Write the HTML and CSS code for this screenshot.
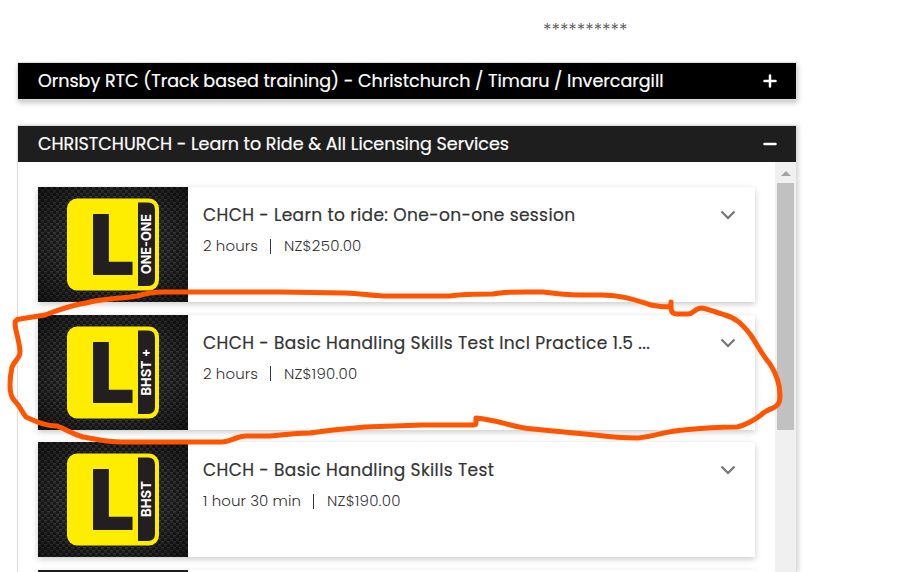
FILE: index.html
```html
<!DOCTYPE html>
<html lang="en">
<head>
<meta charset="utf-8">
<title>Services</title>
<link rel="stylesheet" href="styles.css">
</head>
<body>
<p class="stars">**********</p>

<section class="panel">
  <header class="panel-head"><span>Ornsby RTC (Track based training) - Christchurch / Timaru / Invercargill</span>
    <svg class="toggle" viewBox="0 0 14 14"><path d="M7 1.500v11M1.500 7h11"/></svg></header>
</section>

<section class="panel open">
  <header class="panel-head dark"><span>CHRISTCHURCH - Learn to Ride &amp; All Licensing Services</span>
    <svg class="toggle" viewBox="0 0 14 14"><path d="M1.500 7h11"/></svg></header>
  <div class="panel-body">
    <div class="list">
      <article class="card">
        <svg class="thumb" viewBox="0 0 150 115">
          <defs>
            <pattern id="weave" width="6" height="6" patternUnits="userSpaceOnUse">
              <rect width="6" height="6" fill="#1a1a1a"/>
              <rect width="3" height="1" fill="#3c3c3c"/><rect y="1" width="3" height="2" fill="#2c2c2c"/>
              <rect x="3" y="3" width="3" height="1" fill="#3c3c3c"/><rect x="3" y="4" width="3" height="2" fill="#2c2c2c"/>
            </pattern>
            <radialGradient id="shade" r=".72"><stop offset=".5" stop-opacity="0"/><stop offset="1" stop-opacity=".55"/></radialGradient>
            <g id="plate">
              <rect width="150" height="115" fill="url(#weave)"/>
              <rect width="150" height="115" fill="url(#shade)"/>
              <rect x="29" y="11.500" width="92" height="92" rx="10" fill="#ffed00"/>
              <path d="M100 15.500h10q7 0 7 7v69.500q0 7-7 7h-10z" fill="#231f20"/>
              <text class="big-l" x="51.200" y="88" textLength="45.500" lengthAdjust="spacingAndGlyphs">L</text>
            </g>
          </defs>
          <use href="#plate"/>
          <text class="tag" transform="translate(113 57) rotate(-90)" textLength="60" lengthAdjust="spacingAndGlyphs">ONE-ONE</text>
        </svg>
        <div class="info"><h3>CHCH - Learn to ride: One-on-one session</h3>
          <p><span>2 hours</span><i></i><span class="price">NZ$250.00</span></p></div>
        <svg class="chevron" viewBox="0 0 16 10"><path d="M1.500 1.500L8 8l6.500-6.500"/></svg>
      </article>
      <article class="card">
        <svg class="thumb" viewBox="0 0 150 115"><use href="#plate"/>
          <text class="tag" transform="translate(113 57) rotate(-90)" textLength="47" lengthAdjust="spacingAndGlyphs">BHST +</text></svg>
        <div class="info"><h3>CHCH - Basic Handling Skills Test Incl Practice 1.5 ...</h3>
          <p><span>2 hours</span><i></i><span class="price">NZ$190.00</span></p></div>
        <svg class="chevron" viewBox="0 0 16 10"><path d="M1.500 1.500L8 8l6.500-6.500"/></svg>
      </article>
      <article class="card">
        <svg class="thumb" viewBox="0 0 150 115"><use href="#plate"/>
          <text class="tag" transform="translate(113 57) rotate(-90)" textLength="36" lengthAdjust="spacingAndGlyphs">BHST</text></svg>
        <div class="info"><h3>CHCH - Basic Handling Skills Test</h3>
          <p><span>1 hour 30 min</span><i></i><span class="price">NZ$190.00</span></p></div>
        <svg class="chevron" viewBox="0 0 16 10"><path d="M1.500 1.500L8 8l6.500-6.500"/></svg>
      </article>
      <article class="card peek">
        <svg class="thumb" viewBox="0 0 150 2" preserveAspectRatio="xMinYMin slice"><rect width="150" height="2" fill="#1c1c1c"/></svg>
      </article>
    </div>
    <div class="scrollbar">
      <svg class="arrow" viewBox="0 0 10 5"><path d="M5 0l5 5H0z"/></svg>
      <div class="handle"></div>
    </div>
  </div>
</section>

<svg class="marker" viewBox="0 0 902 572">
  <path d="M671 302V309Q672 314 677 314H688C694 314 694 308 702 308C709 309 717 313 725 315C736 318 742 324 750 334C759 347 760 352 770 364C777 375 780 386 780 395C780 402 779 405 773 408C768 410 765 411 761 415C753 421 746 425 737 427C717 427 702 428 683 430C667 431 656 436 638 438C622 438 610 437 595 435L533 429C511 427 499 420 476 418V423Q476 425 473 425H422L365 427L333 430L310 433C291 433 284 435 270 436H246C237 436 230 442 222 442H122C106 442 96 439 83 437C70 433 66 429 57 426C46 426 37 422 26 417C22 412 20 406 14 400C8 394 10 376 12 367C15 360 20 358 20 352C20 343 16 334 15 324Q15 319 20 319L45 315C58 310 71 305 86 303C105 298 121 299 137 296C147 293 152 292 163 292H280L345 293C360 293 371 296 384 296H450C464 294 484 294 493 294C506 291 529 292 543 292C558 294 566 295 580 295H602C624 295 638 301 651 305C660 307 666 307 671 307"/>
</svg>
</body>
</html>
```
FILE: styles.css
```css
* { box-sizing: border-box; }
body {
  margin: 0;
  height: 572px;
  overflow: hidden;
  background: #fff;
  font-family: Poppins, Inter, sans-serif;
  color: #333;
}
h3, p { margin: 0; font-weight: 400; }
.stars {
  height: 62px;
  padding: 17px 0 0 543px;
  font-size: 18px;
  line-height: 26px;
  font-weight: 300;
  color: #555;
  white-space: nowrap;
}
.panel {
  width: 780px;
  margin-left: 17px;
  border: 1px solid #dedede;
  box-shadow: 1px 3px 5px rgba(0, 0, 0, .22);
}
.open { height: 447px; margin-top: 25px; border-bottom: 0; box-shadow: 2px 0 4px rgba(0, 0, 0, .15); }
.panel-head {
  display: flex;
  align-items: center;
  justify-content: space-between;
  height: 36px;
  padding: 0 19.5px 0 20px;
  color: #fff;
  background: #000;
  font-size: 17.5px;
  white-space: nowrap;
  -webkit-text-stroke: .2px;
}
.dark { background: #1e1e1e; }
.toggle { width: 14px; height: 14px; fill: none; stroke: #fff; stroke-width: 2.5; stroke-linecap: round; }
.panel-body { display: flex; height: 410px; overflow: hidden; }
.list {
  flex: 1;
  display: flex;
  flex-direction: column;
  gap: 12.67px;
  padding: 25px 20px 0;
}
.card {
  display: flex;
  flex: 0 0 115px;
  background: #fff;
  border-radius: 3px 4px 0 0;
  box-shadow: 0 2px 6px rgba(0, 0, 0, .22);
}
.peek { flex-basis: 2px; }
.peek .thumb { height: 2px; }
.thumb { width: 150px; height: 115px; flex: none; }
.big-l { font: 900 84px Inter, sans-serif; fill: #231f20; }
.tag { font: 700 13.6px Inter, sans-serif; fill: #fff; text-anchor: middle; }
.info { flex: 1; padding: 15px 0 0 15px; white-space: nowrap; }
.info h3 { font-size: 17px; line-height: 26px; letter-spacing: .39px; -webkit-text-stroke: .2px; }
.info p { display: flex; align-items: center; margin-top: 6px; font-size: 15px; line-height: 24px; font-weight: 300; letter-spacing: .08px; }
.info .price { letter-spacing: .25px; }
.info i { width: 1px; height: 15px; margin: 0 13px 0 12px; background: #333; }
.chevron { width: 16px; height: 10px; margin: 23px 19.500px 0 0; fill: none; stroke: #757575; stroke-width: 2.2; }
.scrollbar { display: flex; flex-direction: column; align-items: center; width: 21px; padding-top: 9px; background: #f0f0f0; }
.arrow { width: 10px; height: 5px; fill: #a3a3a3; }
.handle { width: 17px; height: 247px; margin-top: 7px; background: #c1c1c1; }
.marker {
  position: absolute;
  top: 0;
  left: 0;
  width: 902px;
  height: 572px;
  fill: none;
  stroke: #ff5500;
  stroke-width: 5;
  stroke-linecap: round;
  stroke-linejoin: round;
  pointer-events: none;
}
```
